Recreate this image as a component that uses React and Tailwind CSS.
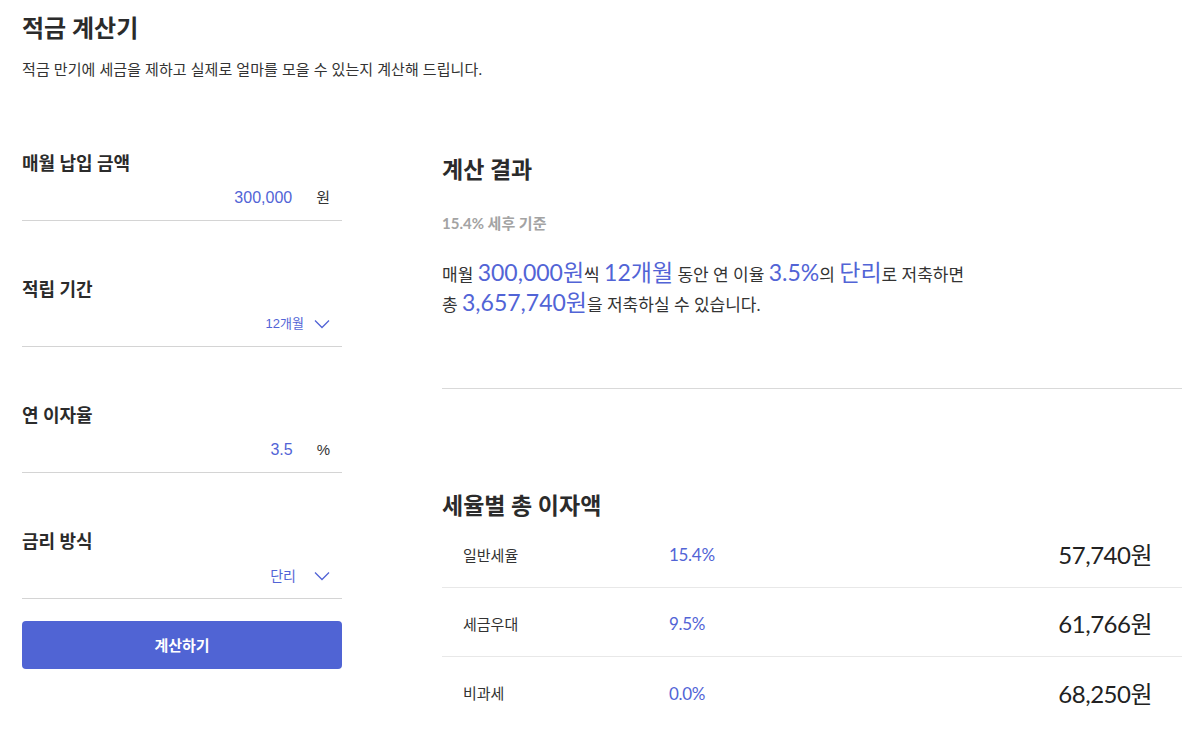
import React from "react";

const FONT = { fontFamily: 'Lato, "Noto Sans CJK KR", sans-serif' };
const INPUT_FONT = { fontFamily: '"Liberation Sans", Arial, "Noto Sans CJK KR", sans-serif' };

function Chevron() {
  return (
    <svg width="16" height="10" viewBox="0 0 16 10" className="ml-[10px]">
      <polyline points="1,1.5 8,8.5 15,1.5" fill="none" stroke="#5264d6" strokeWidth="1.3" />
    </svg>
  );
}

function Field({ label, children, first }) {
  return (
    <div className={first ? "" : "mt-[55px]"}>
      <div className="text-[18px] leading-[26px] font-bold text-[#2b2b2b]">{label}</div>
      <div className="h-[45px] border-b border-[#d4d4d4] flex items-center justify-end pr-[12px]" style={INPUT_FONT}>
        {children}
      </div>
    </div>
  );
}

function Row({ name, rate, amount, last }) {
  return (
    <div className={"h-[69px] flex items-center pt-[4px] pl-[21px] pr-[30px] " + (last ? "" : "border-b border-[#e8e8e8]")}>
      <div className="w-[206px] text-[15px] text-[#333]">{name}</div>
      <div className="text-[17px] text-[#5264d6] tracking-[-0.3px]">{rate}</div>
      <div className="ml-auto text-[24px] text-[#222] tracking-[-0.5px]">{amount}</div>
    </div>
  );
}

export default function App() {
  const hl = "text-[23px] leading-none text-[#5264d6]";
  return (
    <div className="min-h-[740px] bg-white pl-[22px] pr-[2px] pt-3 text-[#333]" style={FONT}>
      <h1 className="text-[24px] leading-8 font-bold text-[#2b2b2b]">적금 계산기</h1>
      <p className="mt-[15px] text-[15px] leading-5 text-[#333] tracking-[0.1px]">
        적금 만기에 세금을 제하고 실제로 얼마를 모을 수 있는지 계산해 드립니다.
      </p>

      <div className="mt-[71px] flex items-start">
        <div className="w-[320px] shrink-0">
          <Field label="매월 납입 금액" first>
            <span className="text-[16px] text-[#5264d6]">300,000</span>
            <span className="ml-[24px] text-[15px] text-[#333]">원</span>
          </Field>
          <Field label="적립 기간">
            <span className="text-[13px] text-[#5264d6]">12개월</span>
            <Chevron />
          </Field>
          <Field label="연 이자율">
            <span className="text-[16px] text-[#5264d6]">3.5</span>
            <span className="ml-[24px] text-[15px] text-[#333]">%</span>
          </Field>
          <Field label="금리 방식">
            <span className="text-[14px] text-[#5264d6] mr-[8px]">단리</span>
            <Chevron />
          </Field>
          <button className="mt-[22px] w-full h-[48px] rounded-[4px] bg-[#5064d4] text-white text-[15px] font-bold" style={FONT}>
            계산하기
          </button>
        </div>

        <div className="ml-[100px] flex-1 mt-[4px]">
          <h2 className="text-[23px] leading-[30px] font-bold text-[#2b2b2b]">계산 결과</h2>
          <div className="mt-[29px] text-[15px] leading-5 font-bold text-[#a3a3a3]">15.4% 세후 기준</div>
          <div className="mt-[27px] text-[17px] leading-[30px] text-[#333]">
            <div className="h-[30px]">
              매월 <span className={hl}>300,000원</span>씩 <span className={hl}>12개월</span> 동안 연 이율{" "}
              <span className={hl}>3.5%</span>의 <span className={hl}>단리</span>로 저축하면
            </div>
            <div className="h-[30px]">
              총 <span className={hl}>3,657,740원</span>을 저축하실 수 있습니다.
            </div>
          </div>
          <div className="mt-[68px] border-t border-[#d9d9d9]" />
          <h2 className="mt-[102px] text-[23px] leading-[28px] font-bold text-[#2b2b2b]">세율별 총 이자액</h2>
          <div>
            <Row name="일반세율" rate="15.4%" amount="57,740원" />
            <Row name="세금우대" rate="9.5%" amount="61,766원" />
            <Row name="비과세" rate="0.0%" amount="68,250원" last />
          </div>
        </div>
      </div>
    </div>
  );
}
